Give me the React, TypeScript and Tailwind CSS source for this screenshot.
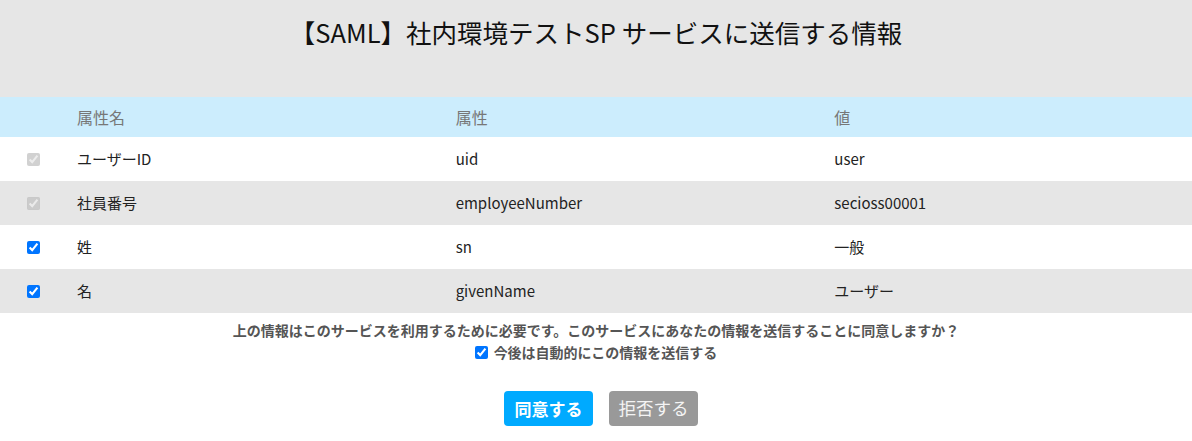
import React from 'react';

interface IAttr {
  label: string;
  name: string;
  value: string;
  required: boolean;
}

const attrs: IAttr[] = [
  { label: 'ユーザーID', name: 'uid', value: 'user', required: true },
  { label: '社員番号', name: 'employeeNumber', value: 'secioss00001', required: true },
  { label: '姓', name: 'sn', value: '一般', required: false },
  { label: '名', name: 'givenName', value: 'ユーザー', required: false },
];

const App: React.FC = () => {
  return (
    <div className="min-h-[441px] bg-white font-['Noto_Sans_CJK_JP','Noto_Sans',sans-serif] text-[#222]">
      <div className="h-[97px] bg-[#e6e6e6] pt-[13px] text-center">
        <h1 className="text-[25.5px] leading-[38px] text-[#111]">
          【SAML】社内環境テストSP サービスに送信する情報
        </h1>
      </div>

      <div className="grid h-[40px] grid-cols-[56px_1fr_1fr_1fr] items-center bg-[#ccedfd] text-[16px] text-[#777]">
        <div />
        <div className="pl-[21px]">属性名</div>
        <div className="pl-[21px]">属性</div>
        <div className="pl-[21px]">値</div>
      </div>

      {attrs.map((a, i) => (
        <div
          key={a.name}
          className={[
            'grid h-[44px] grid-cols-[56px_1fr_1fr_1fr] items-center text-[15px]',
            i % 2 === 1 ? 'bg-[#e6e6e6]' : 'bg-white',
          ].join(' ')}
        >
          <div className="flex items-center pl-[27px]">
            <input type="checkbox" defaultChecked disabled={a.required} className="m-0 h-[13px] w-[13px]" />
          </div>
          <div className="pl-[21px]">{a.label}</div>
          <div className="pl-[21px]">{a.name}</div>
          <div className="pl-[21px]">{a.value}</div>
        </div>
      ))}

      <div className="pt-[7px] text-center text-[14px] font-bold text-[#555]">
        <p className="leading-[20px]">
          上の情報はこのサービスを利用するために必要です。このサービスにあなたの情報を送信することに同意しますか？
        </p>
        <label className="mt-[1px] flex items-center justify-center gap-[6px] leading-[22px]">
          <input type="checkbox" defaultChecked className="m-0 h-[13px] w-[13px]" />
          今後は自動的にこの情報を送信する
        </label>
      </div>

      <div className="mt-[28px] flex justify-center gap-[16px] pl-[10px]">
        <button
          type="button"
          className="h-[35px] w-[89px] rounded-[4px] bg-[#00aaff] text-[17px] font-bold text-white"
        >
          同意する
        </button>
        <button
          type="button"
          className="h-[35px] w-[89px] rounded-[4px] bg-[#999999] text-[17.5px] text-[#f4f4f4]"
        >
          拒否する
        </button>
      </div>
    </div>
  );
};

export default App;
